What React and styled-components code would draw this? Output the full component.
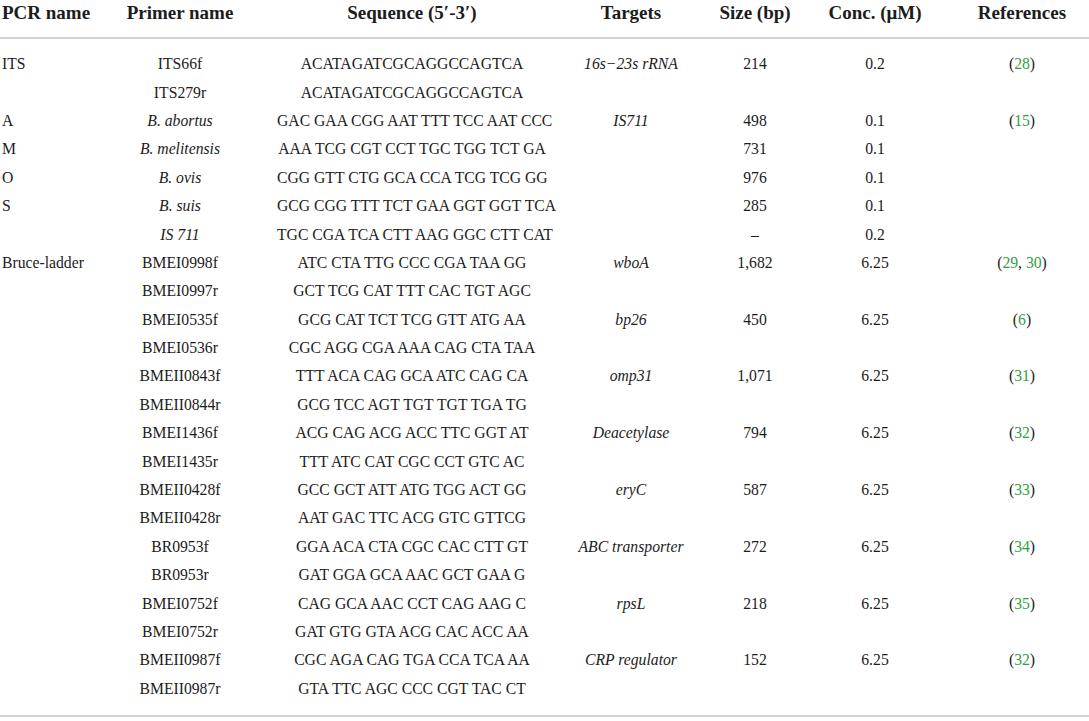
import React from 'react'
import styled, { createGlobalStyle } from 'styled-components'

const Global = createGlobalStyle`
    html, body {
        margin: 0;
        padding: 0;
        background: #ffffff;
    }
    body {
        font-family: "Liberation Serif", "DejaVu Serif", serif;
        color: #1c1c1c;
    }
`

const cols = '83px 194px 270px 168px 80px 160px 134px'

const Table = styled.div`
    width: 1089px;
    display: flex;
    flex-direction: column;
`

const HeadRow = styled.div`
    display: grid;
    grid-template-columns: ${cols};
    height: 39px;
    border-bottom: 2px solid #d2d2d2;
    box-sizing: border-box;
`

const HeadCell = styled.div`
    font-size: 19px;
    font-weight: 700;
    line-height: 26px;
    white-space: nowrap;
    text-align: ${(p) => p.$left ? 'left' : 'center'};
    padding-left: ${(p) => p.$left ? '2px' : '0'};
`

const Body = styled.div`
    padding: 11px 0 12px;
    border-bottom: 2px solid #d2d2d2;
`

const Row = styled.div`
    display: grid;
    grid-template-columns: ${cols};
    height: 28.4px;
    align-items: center;
`

const Cell = styled.div`
    font-size: 15.7px;
    line-height: 20px;
    white-space: nowrap;
    text-align: ${(p) => p.$left ? 'left' : 'center'};
    padding-left: ${(p) => p.$left ? '2px' : '0'};
    font-style: ${(p) => p.$italic ? 'italic' : 'normal'};
`

const Cite = styled.span`
    color: #2f9e3f;
`

const rows = [
    ['ITS', 'ITS66f', 'ACATAGATCGCAGGCCAGTCA', '16s−23s rRNA', '214', '0.2', [28]],
    ['', 'ITS279r', 'ACATAGATCGCAGGCCAGTCA'],
    ['A', 'B. abortus', 'GAC GAA CGG AAT TTT TCC AAT CCC', 'IS711', '498', '0.1', [15], true],
    ['M', 'B. melitensis', 'AAA TCG CGT CCT TGC TGG TCT GA', '', '731', '0.1', null, true],
    ['O', 'B. ovis', 'CGG GTT CTG GCA CCA TCG TCG GG', '', '976', '0.1', null, true],
    ['S', 'B. suis', 'GCG CGG TTT TCT GAA GGT GGT TCA', '', '285', '0.1', null, true],
    ['', 'IS 711', 'TGC CGA TCA CTT AAG GGC CTT CAT', '', '–', '0.2', null, true],
    ['Bruce-ladder', 'BMEI0998f', 'ATC CTA TTG CCC CGA TAA GG', 'wboA', '1,682', '6.25', [29, 30]],
    ['', 'BMEI0997r', 'GCT TCG CAT TTT CAC TGT AGC'],
    ['', 'BMEI0535f', 'GCG CAT TCT TCG GTT ATG AA', 'bp26', '450', '6.25', [6]],
    ['', 'BMEI0536r', 'CGC AGG CGA AAA CAG CTA TAA'],
    ['', 'BMEII0843f', 'TTT ACA CAG GCA ATC CAG CA', 'omp31', '1,071', '6.25', [31]],
    ['', 'BMEII0844r', 'GCG TCC AGT TGT TGT TGA TG'],
    ['', 'BMEI1436f', 'ACG CAG ACG ACC TTC GGT AT', 'Deacetylase', '794', '6.25', [32]],
    ['', 'BMEI1435r', 'TTT ATC CAT CGC CCT GTC AC'],
    ['', 'BMEII0428f', 'GCC GCT ATT ATG TGG ACT GG', 'eryC', '587', '6.25', [33]],
    ['', 'BMEII0428r', 'AAT GAC TTC ACG GTC GTTCG'],
    ['', 'BR0953f', 'GGA ACA CTA CGC CAC CTT GT', 'ABC transporter', '272', '6.25', [34]],
    ['', 'BR0953r', 'GAT GGA GCA AAC GCT GAA G'],
    ['', 'BMEI0752f', 'CAG GCA AAC CCT CAG AAG C', 'rpsL', '218', '6.25', [35]],
    ['', 'BMEI0752r', 'GAT GTG GTA ACG CAC ACC AA'],
    ['', 'BMEII0987f', 'CGC AGA CAG TGA CCA TCA AA', 'CRP regulator', '152', '6.25', [32]],
    ['', 'BMEII0987r', 'GTA TTC AGC CCC CGT TAC CT'],
]

const Refs = ({ nums }) => {
    if (!nums) return null
    return (
        <>
            (
            {nums.map((n, i) => (
                <React.Fragment key={n}>
                    {i > 0 && ', '}
                    <Cite>{n}</Cite>
                </React.Fragment>
            ))}
            )
        </>
    )
}

const App = () => {
    return (
        <Table>
            <Global />
            <HeadRow>
                <HeadCell $left>PCR name</HeadCell>
                <HeadCell>Primer name</HeadCell>
                <HeadCell>Sequence (5′-3′)</HeadCell>
                <HeadCell>Targets</HeadCell>
                <HeadCell>Size (bp)</HeadCell>
                <HeadCell>Conc. (μM)</HeadCell>
                <HeadCell>References</HeadCell>
            </HeadRow>
            <Body>
                {rows.map(([pcr, primer, seq, target, size, conc, refs, italicPrimer], i) => (
                    <Row key={i}>
                        <Cell $left>{pcr}</Cell>
                        <Cell $italic={italicPrimer}>{primer}</Cell>
                        <Cell>{seq}</Cell>
                        <Cell $italic>{target}</Cell>
                        <Cell>{size}</Cell>
                        <Cell>{conc}</Cell>
                        <Cell><Refs nums={refs} /></Cell>
                    </Row>
                ))}
            </Body>
        </Table>
    )
}

export default App
